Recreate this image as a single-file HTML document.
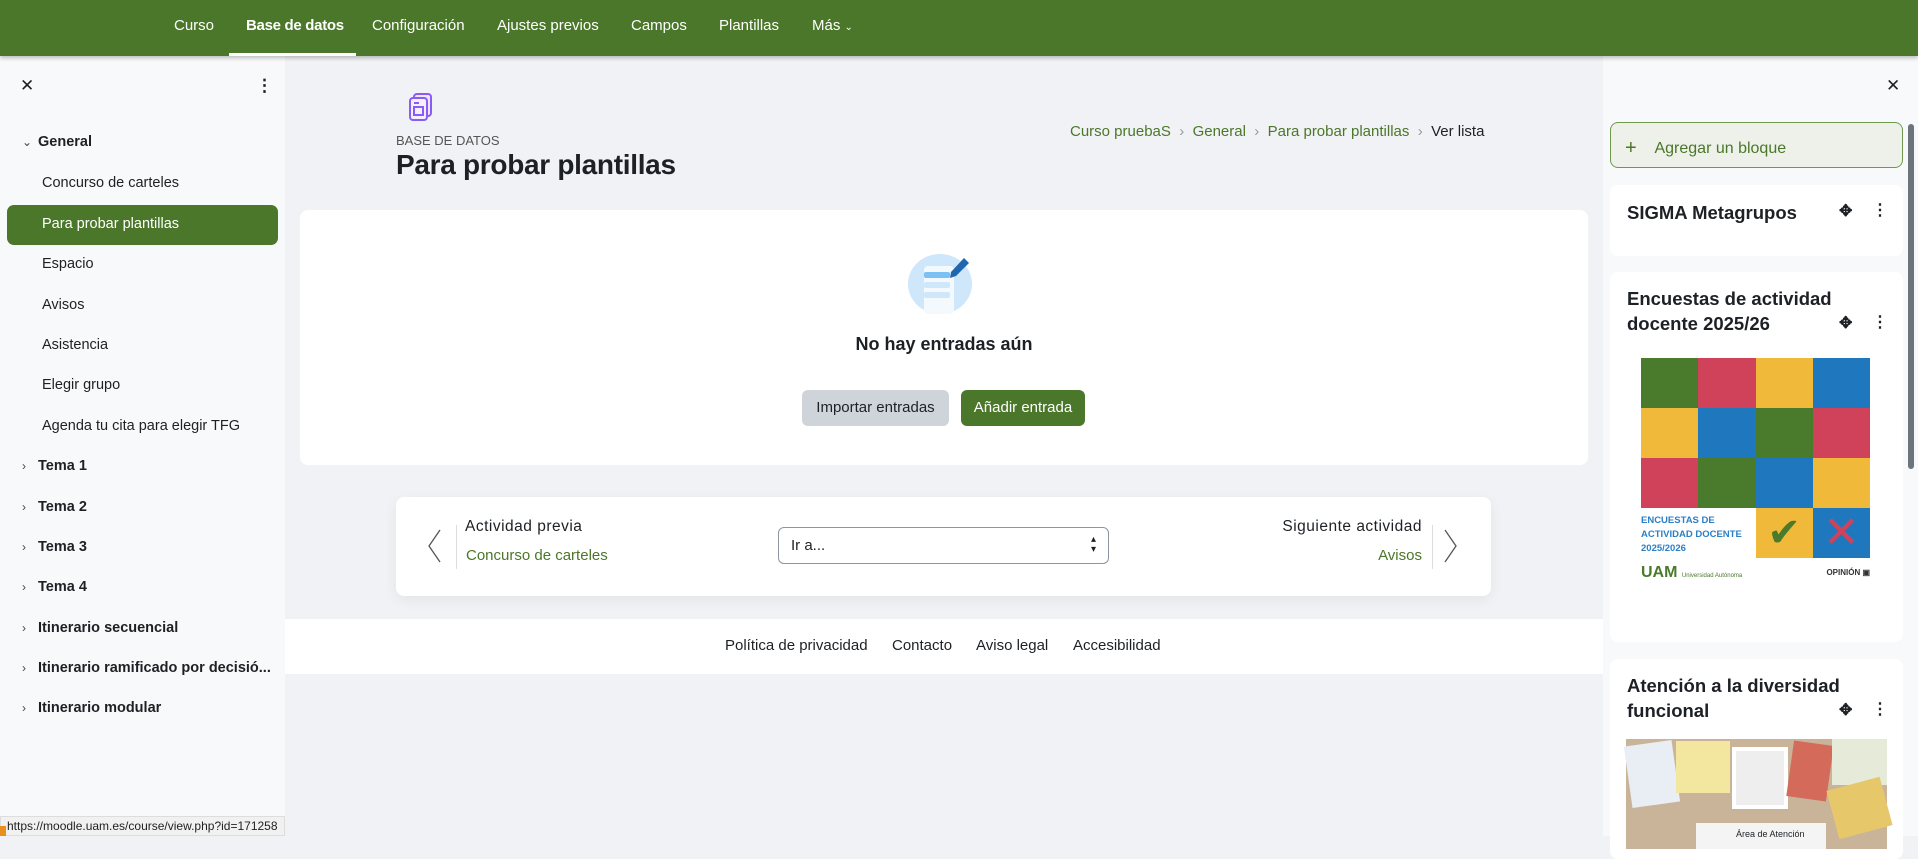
<!DOCTYPE html>
<html><head><meta charset="utf-8"><style>
*{box-sizing:border-box;margin:0;padding:0}
body{width:1918px;height:836px;overflow:hidden;font-family:"Liberation Sans",sans-serif;background:#f1f2f5;position:relative;color:#1d2125}
.a{position:absolute}
.nav{left:0;top:0;width:1918px;height:56px;background:#4a7729;box-shadow:0 2px 4px rgba(0,0,0,.25);z-index:3}
.nav span{position:absolute;top:17px;color:#fff;font-size:15px}
.side{left:0;top:56px;width:285px;height:780px;background:#f8f9fa}
.side .i{position:absolute;left:42px;font-size:14.5px;color:#1d2125}
.side .s{position:absolute;left:22px;font-size:14.5px;font-weight:bold;color:#1d2125}
.side .s b{display:inline-block;width:16px;font-weight:normal;font-size:12px;color:#444}
.right{left:1603px;top:56px;width:315px;height:780px;background:#f8f9fa}
.blk{position:absolute;left:1610px;width:293px;background:#fff;border-radius:8px}
.bt{position:absolute;left:17px;font-size:18.5px;font-weight:bold;line-height:25px;color:#1d2125}
.ic{position:absolute;font-size:16px;font-weight:bold}
.t{position:absolute}
</style></head><body>
<div class="a nav">
<span style="left:174px">Curso</span>
<span style="left:246px;font-weight:bold;letter-spacing:-.3px">Base de datos</span>
<span style="left:372px">Configuración</span>
<span style="left:497px">Ajustes previos</span>
<span style="left:631px">Campos</span>
<span style="left:719px">Plantillas</span>
<span style="left:812px">Más <small style="font-size:10px">⌄</small></span>
<div class="a" style="left:229px;top:53px;width:127px;height:3px;background:#fff"></div>
</div>
<div class="a side">
<div class="a" style="left:20px;top:20px;font-size:17px">✕</div>
<div class="a" style="left:256px;top:20px;font-size:17px;font-weight:bold">⋮</div>
<div class="s" style="top:78px"><b>⌄</b>General</div>
<div class="i" style="top:119px">Concurso de carteles</div>
<div class="a" style="left:7px;top:149px;width:271px;height:40px;background:#4a7729;border-radius:7px"></div>
<div class="i" style="top:160px;color:#fff">Para probar plantillas</div>
<div class="i" style="top:200px">Espacio</div>
<div class="i" style="top:241px">Avisos</div>
<div class="i" style="top:281px">Asistencia</div>
<div class="i" style="top:321px">Elegir grupo</div>
<div class="i" style="top:362px">Agenda tu cita para elegir TFG</div>
<div class="s" style="top:402px"><b>›</b>Tema 1</div>
<div class="s" style="top:443px"><b>›</b>Tema 2</div>
<div class="s" style="top:483px"><b>›</b>Tema 3</div>
<div class="s" style="top:523px"><b>›</b>Tema 4</div>
<div class="s" style="top:564px"><b>›</b>Itinerario secuencial</div>
<div class="s" style="top:604px"><b>›</b>Itinerario ramificado por decisió...</div>
<div class="s" style="top:644px"><b>›</b>Itinerario modular</div>
<div class="a" style="left:0;top:760px;width:285px;height:20px;background:#f1f1f1;border:1px solid #ddd;font-size:12px;padding:2px 0 0 6px;color:#222">https://moodle.uam.es/course/view.php?id=171258</div>
<div class="a" style="left:0;top:770px;width:6px;height:10px;background:#e8901c"></div>
</div>
<svg class="a" style="left:408px;top:92px" width="28" height="30" viewBox="0 0 28 30"><rect x="6" y="2" width="17" height="22" rx="3" fill="#ede7fb" stroke="#8a5cf5" stroke-width="2"/><rect x="2" y="6" width="17" height="22" rx="3" fill="#f3efff" stroke="#8a5cf5" stroke-width="2"/><line x1="6" y1="11" x2="11" y2="11" stroke="#8a5cf5" stroke-width="2"/><rect x="6" y="15" width="9" height="8" fill="none" stroke="#8a5cf5" stroke-width="2"/></svg>
<div class="t" style="left:396px;top:133px;font-size:13px;color:#555">BASE DE DATOS</div>
<div class="t" style="left:396px;top:149px;font-size:28px;font-weight:bold;letter-spacing:-.3px">Para probar plantillas</div>
<div class="t" style="left:1070px;top:123px;font-size:15px;color:#4a7729;white-space:nowrap">Curso pruebaS <span style="color:#999">&nbsp;›&nbsp;</span> General <span style="color:#999">&nbsp;›&nbsp;</span> Para probar plantillas <span style="color:#999">&nbsp;›&nbsp;</span> <span style="color:#1d2125">Ver lista</span></div>
<div class="a" style="left:300px;top:210px;width:1288px;height:255px;background:#fff;border-radius:8px"></div>
<svg class="a" style="left:906px;top:252px" width="72" height="64" viewBox="0 0 72 64"><ellipse cx="34" cy="32" rx="32" ry="30" fill="#cfe7fb"/><rect x="18" y="14" width="30" height="48" rx="4" fill="#f4f9fe"/><rect x="18" y="20" width="26" height="6" rx="2" fill="#7cc1f3"/><rect x="18" y="30" width="26" height="6" rx="2" fill="#cfe7fb"/><rect x="18" y="40" width="26" height="6" rx="2" fill="#cfe7fb"/><path d="M45 20 L58 6 L63 11 L50 24 L44 26 Z" fill="#2166b0"/></svg>
<div class="t" style="left:300px;width:1288px;text-align:center;top:334px;font-size:18px;font-weight:bold">No hay entradas aún</div>
<div class="a" style="left:802px;top:390px;width:147px;height:36px;background:#ced4da;border-radius:6px;font-size:15px;text-align:center;line-height:36px">Importar entradas</div>
<div class="a" style="left:961px;top:390px;width:124px;height:36px;background:#4a7729;color:#fff;border-radius:6px;font-size:15px;text-align:center;line-height:36px">Añadir entrada</div>
<div class="a" style="left:396px;top:497px;width:1095px;height:99px;background:#fff;border-radius:8px;box-shadow:0 4px 14px rgba(0,0,0,.06)"></div>
<svg class="a" style="left:426px;top:528px" width="16" height="36"><path d="M14 2 L3 18 L14 34" fill="none" stroke="#555" stroke-width="1.3"/></svg>
<div class="a" style="left:456px;top:525px;width:1px;height:44px;background:#ddd"></div>
<div class="t" style="left:465px;top:518px;font-size:15.5px;letter-spacing:.5px">Actividad previa</div>
<div class="t" style="left:466px;top:547px;font-size:15px;color:#4a7729">Concurso de carteles</div>
<div class="a" style="left:778px;top:527px;width:331px;height:37px;border:1px solid #8f959e;border-radius:6px;font-size:15px;padding:9px 12px">Ir a...<span style="position:absolute;right:12px;top:7px;font-size:10px;line-height:10px">▴<br>▾</span></div>
<div class="t" style="left:1160px;width:262px;text-align:right;top:518px;font-size:15.5px;letter-spacing:.5px">Siguiente actividad</div>
<div class="t" style="left:1160px;width:262px;text-align:right;top:547px;font-size:15px;color:#4a7729">Avisos</div>
<div class="a" style="left:1432px;top:525px;width:1px;height:44px;background:#ddd"></div>
<svg class="a" style="left:1443px;top:528px" width="16" height="36"><path d="M2 2 L13 18 L2 34" fill="none" stroke="#555" stroke-width="1.3"/></svg>
<div class="a" style="left:285px;top:619px;width:1318px;height:55px;background:#fff"></div>
<div class="t" style="left:725px;top:637px;font-size:15px">Política de privacidad</div>
<div class="t" style="left:892px;top:637px;font-size:15px">Contacto</div>
<div class="t" style="left:976px;top:637px;font-size:15px">Aviso legal</div>
<div class="t" style="left:1073px;top:637px;font-size:15px">Accesibilidad</div>
<div class="a right">
<div class="a" style="left:283px;top:20px;font-size:17px">✕</div>
<div class="a" style="left:305px;top:68px;width:6px;height:345px;background:#6c757d;border-radius:3px"></div>
</div>
<div class="a" style="left:1610px;top:122px;width:293px;height:46px;border:1px solid #6f9a4e;border-radius:8px;background:#eef1ea;color:#4a7729;font-size:16px;padding:13px 0 0 14px"><span style="font-size:20px;position:relative;top:1px">+</span>&nbsp;&nbsp;&nbsp;&nbsp;Agregar un bloque</div>
<div class="blk" style="top:185px;height:71px"><div class="bt" style="top:15px">SIGMA Metagrupos</div><div class="ic" style="left:229px;top:16px">✥</div><div class="ic" style="left:262px;top:15px">⋮</div></div>
<div class="blk" style="top:272px;height:370px"><div class="bt" style="top:14px">Encuestas de actividad<br>docente 2025/26</div><div class="ic" style="left:229px;top:41px">✥</div><div class="ic" style="left:262px;top:40px">⋮</div>
<div class="a" style="left:31px;top:86px;width:229px;height:250px">
<div style="display:grid;grid-template-columns:repeat(4,57.25px);grid-template-rows:repeat(4,50px)">
<div style="background:#4a7a2c"></div><div style="background:#d0425a"></div><div style="background:#f0b93a"></div><div style="background:#1f78be"></div>
<div style="background:#f0b93a"></div><div style="background:#1f78be"></div><div style="background:#4a7a2c"></div><div style="background:#d0425a"></div>
<div style="background:#d0425a"></div><div style="background:#4a7a2c"></div><div style="background:#1f78be"></div><div style="background:#f0b93a"></div>
<div style="grid-column:span 2;background:#fff;color:#2a7fc6;font-weight:bold;font-size:9.5px;line-height:14px;padding-top:6px">ENCUESTAS DE<br>ACTIVIDAD DOCENTE<br>2025/2026</div><div style="background:#f0b93a;color:#4a7a2c;font-size:40px;text-align:center;line-height:50px">✔</div><div style="background:#1f78be;color:#d0425a;font-size:44px;text-align:center;line-height:50px">✕</div>
</div>
<div style="font-size:16px;font-weight:bold;color:#4a7a2c;margin-top:6px">UAM <span style="font-size:6px;color:#4a7a2c;font-weight:normal">Universidad Autónoma</span><span style="float:right;font-size:8px;color:#333;margin-top:4px">OPINIÓN ▣</span></div>
</div></div>
<div class="blk" style="top:659px;height:200px"><div class="bt" style="top:14px">Atención a la diversidad<br>funcional</div><div class="ic" style="left:229px;top:41px">✥</div><div class="ic" style="left:262px;top:40px">⋮</div>
<div class="a" style="left:16px;top:80px;width:261px;height:110px;background:#c9b49a">
<div class="a" style="left:2px;top:4px;width:48px;height:62px;background:#e8eef4;transform:rotate(-8deg)"></div>
<div class="a" style="left:50px;top:2px;width:54px;height:52px;background:#f3e7a0"></div>
<div class="a" style="left:106px;top:8px;width:56px;height:62px;background:#eee;border:4px solid #fff"></div>
<div class="a" style="left:164px;top:4px;width:40px;height:56px;background:#d46b5a;transform:rotate(8deg)"></div>
<div class="a" style="left:206px;top:0;width:55px;height:46px;background:#e6ead8"></div>
<div class="a" style="left:206px;top:44px;width:55px;height:50px;background:#e6c86a;transform:rotate(-15deg)"></div>
<div class="a" style="left:70px;top:84px;width:130px;height:26px;background:#f4f4f4;font-size:9px;padding:6px 0 0 40px">Área de Atención</div>
</div></div>
</body></html>
